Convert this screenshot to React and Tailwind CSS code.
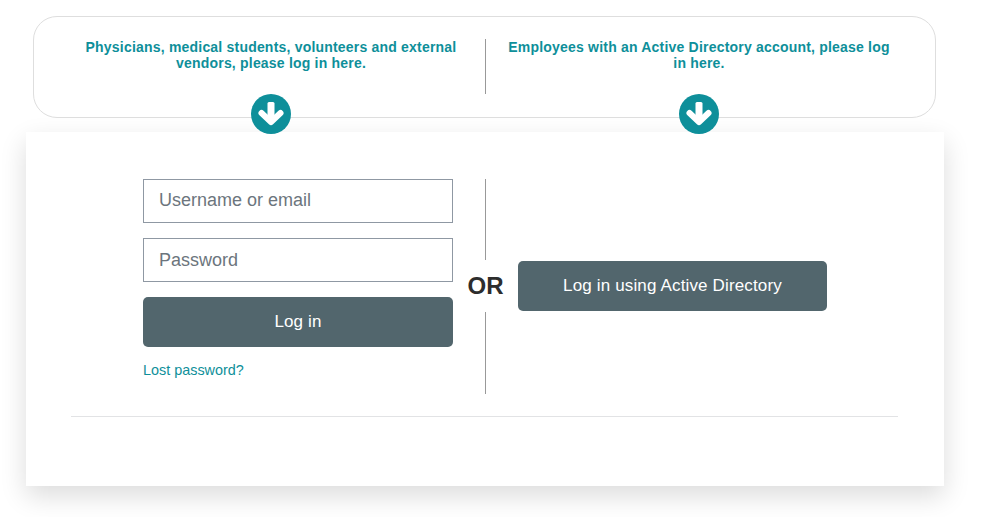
const TEAL = 'text-[#0e8f9a]';

function ArrowBadge() {
  return (
    <svg viewBox="0 0 40 40" className="h-10 w-10">
      <circle cx="20" cy="20" r="20" fill="#0e8f9a" />
      <rect x="16.5" y="8" width="7" height="18" rx="1.5" fill="#fff" />
      <polyline points="10.5,19 20,28 29.5,19" fill="none" stroke="#fff" strokeWidth="6" strokeLinecap="round" strokeLinejoin="round" />
    </svg>
  );
}

function Prompt({ children }) {
  return (
    <div className="relative h-full w-[400px]">
      <p className={`px-[4px] text-center text-[14px] font-bold leading-[16px] tracking-[0.2px] ${TEAL}`}>{children}</p>
      {/* arrow sits over the box border and the card edge */}
      <div className="absolute left-1/2 top-[55px] z-10 h-10 w-10 -translate-x-1/2">
        <ArrowBadge />
      </div>
    </div>
  );
}

export default function App() {
  return (
    <div className="h-[517px] w-[988px] overflow-hidden bg-white pl-[26px] pt-4 font-['Liberation_Sans',Arial,sans-serif]">
      {/* Who logs in where */}
      <div className="ml-[7px] h-[102px] w-[903px] rounded-[24px] border border-[#dedede] pl-[37px] pt-[22px]">
        <div className="flex h-[55px]">
          <Prompt>Physicians, medical students, volunteers and external vendors, please log in here.</Prompt>
          <div className="ml-[14px] mr-[13px] w-px bg-[#999]" />
          <Prompt>Employees with an Active Directory account, please log in here.</Prompt>
        </div>
      </div>

      {/* Login card */}
      <div className="mt-[14px] h-[354px] w-[918px] bg-white pl-[45px] pr-[46px] pt-[47px] shadow-[0_10px_25px_rgba(0,0,0,0.14)]">
        <div className="flex h-[215px] pl-[72px]">
          <div className="flex w-[310px] flex-col">
            <input
              type="text"
              placeholder="Username or email"
              className="h-[44px] w-full border border-[#8f98a3] bg-white px-[15px] pb-[2px] text-[18px] text-[#333] placeholder:text-[#6c757d] outline-none"
            />
            <input
              type="password"
              placeholder="Password"
              className="mt-[15px] h-[44px] w-full border border-[#8f98a3] bg-white px-[15px] text-[18px] text-[#333] placeholder:text-[#6c757d] outline-none"
            />
            <button className="mt-[15px] h-[50px] w-full rounded-[5px] bg-[#52666d] text-[17px] tracking-[0.15px] text-white">Log in</button>
            <a className={`mt-[15px] text-[14.4px] leading-[16px] ${TEAL}`}>Lost password?</a>
          </div>

          <div className="ml-[14px] flex w-[37px] flex-col items-center">
            <div className="h-[81px] w-px bg-[#999]" />
            <span className="py-[12px] text-[24px] font-bold leading-[28px] text-[#2d2d2d]">OR</span>
            <div className="w-px flex-1 bg-[#999]" />
          </div>

          <div className="ml-[14px] flex items-center pb-[2px]">
            <button className="h-[50px] w-[309px] rounded-[5px] bg-[#52666d] text-[17px] tracking-[0.15px] text-white">Log in using Active Directory</button>
          </div>
        </div>
        <div className="mt-[22px] h-px bg-[#e2e3e5]" />
      </div>
    </div>
  );
}
